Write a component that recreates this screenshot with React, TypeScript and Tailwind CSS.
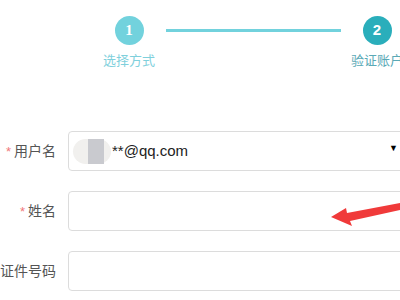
import React from "react";

const font = { fontFamily: '"Liberation Sans", "Noto Sans CJK SC", sans-serif' };

function Row({ label, required, children }: { label: string; required?: boolean; children?: React.ReactNode }) {
  return (
    <div className="flex items-center h-[40px]">
      <div className="w-[56px] shrink-0 flex justify-end items-center text-[14px] text-[#555]">
        {required && <span className="text-[#f0787a] text-[13px] mr-[3px] mt-[2px]">*</span>}
        <span>{label}</span>
      </div>
      <div className="ml-[12px] w-[360px] shrink-0 h-[40px] border border-[#dcdcdc] rounded-[4px] bg-white flex items-center relative">
        {children}
      </div>
    </div>
  );
}

export default function App() {
  return (
    <div className="w-[400px] h-[300px] overflow-hidden bg-white relative" style={font}>
      <div className="flex pt-[16px] pl-[99px]">
        <div className="w-[60px] shrink-0 flex flex-col items-center">
          <div className="w-[29px] h-[29px] rounded-full bg-[#72d2dd] flex items-center justify-center text-white text-[15px] font-bold" style={{ fontFamily: '"Liberation Serif", serif' }}>1</div>
          <div className="mt-[8px] text-[13px] leading-[16px] text-[#7fd0dc] whitespace-nowrap">选择方式</div>
        </div>
        <div className="ml-[7px] w-[175px] h-[3px] bg-[#72d2dd] mt-[13px] shrink-0" />
        <div className="ml-[6px] w-[60px] shrink-0 flex flex-col items-center">
          <div className="w-[29px] h-[29px] rounded-full bg-[#2aaebb] flex items-center justify-center text-white text-[15px] font-bold">2</div>
          <div className="mt-[8px] text-[13px] leading-[16px] text-[#5aa9b6] whitespace-nowrap">验证账户</div>
        </div>
      </div>

      <div className="mt-[62px] flex flex-col gap-[20px]">
        <Row label="用户名" required>
          <div className="ml-[4px] w-[38px] h-[25px] rounded-full bg-[#f1f0ee] relative">
            <div className="absolute left-[15px] top-0 w-[16px] h-[25px] bg-[#c9cacf]" />
          </div>
          <span className="ml-[1px] text-[15px] text-[#222]">**@qq.com</span>
          <span className="absolute left-[320px] top-[10px] text-[9px] text-black">▼</span>
        </Row>
        <Row label="姓名" required />
        <Row label="证件号码" />
      </div>

      <svg className="absolute left-[328px] top-[198px]" width="72" height="34" viewBox="0 0 72 34">
        <polygon points="3,19 18,10 19,15 72,5 72,12 22,23 24,28" fill="#f03a3a" />
      </svg>
    </div>
  );
}
